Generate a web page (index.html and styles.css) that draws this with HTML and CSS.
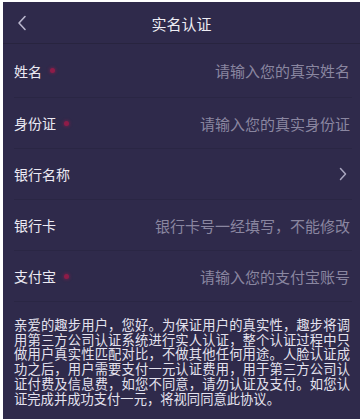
FILE: index.html
```html
<!DOCTYPE html>
<html lang="zh">
<head>
<meta charset="utf-8">
<title>实名认证</title>
<link rel="stylesheet" href="styles.css">
</head>
<body>
<div class="screen">
  <header class="nav">
    <svg class="back" width="10" height="16" viewBox="0 0 10 16"><path d="M8 1.5 L2 8 L8 14.5" fill="none" stroke="#b9b6cc" stroke-width="1.6" stroke-linecap="round" stroke-linejoin="round"/></svg>
    <div class="title">实名认证</div>
  </header>
  <div class="form">
    <div class="row">
      <div class="label">姓名<span class="req"></span></div>
      <div class="ph">请输入您的真实姓名</div>
    </div>
    <div class="row">
      <div class="label">身份证<span class="req"></span></div>
      <div class="ph">请输入您的真实身份证</div>
    </div>
    <div class="row">
      <div class="label">银行名称</div>
      <svg class="arrow" width="8" height="14" viewBox="0 0 8 14"><path d="M1.5 1.5 L6.5 7 L1.5 12.5" fill="none" stroke="#a9a6bf" stroke-width="1.5" stroke-linecap="round" stroke-linejoin="round"/></svg>
    </div>
    <div class="row">
      <div class="label">银行卡</div>
      <div class="ph">银行卡号一经填写，不能修改</div>
    </div>
    <div class="row">
      <div class="label">支付宝<span class="req"></span></div>
      <div class="ph">请输入您的支付宝账号</div>
    </div>
  </div>
  <p class="notice">亲爱的趣步用户，您好。为保证用户的真实性，趣步将调用第三方公司认证系统进行实人认证，整个认证过程中只做用户真实性匹配对比，不做其他任何用途。人脸认证成功之后，用户需要支付一元认证费用，用于第三方公司认证付费及信息费，如您不同意，请勿认证及支付。如您认证完成并成功支付一元，将视同同意此协议。</p>
</div>
</body>
</html>
```

FILE: styles.css
```css
html, body {
  margin: 0;
  padding: 0;
  background: #ffffff;
}
.screen {
  margin: 2px 4px 0 3px;
  height: 417px;
  background: #2f2a4b;
  overflow: hidden;
  font-family: "Noto Sans CJK SC", "Noto Sans", sans-serif;
}
.nav {
  height: 41px;
  display: flex;
  align-items: center;
  justify-content: center;
  position: relative;
  border-bottom: 1px solid #28243f;
}
.back {
  position: absolute;
  left: 14px;
  top: 13px;
}
.title {
  color: #eeedf4;
  font-size: 15px;
  line-height: 20px;
  padding-top: 2px;
}
.form {
  padding: 0 8px 0 11px;
}
.row {
  height: 50px;
  display: flex;
  align-items: center;
  justify-content: space-between;
  border-bottom: 1px solid #2a2644;
}
.row:first-child {
  height: 53px;
}
.label {
  color: #eceaf3;
  font-size: 14px;
  display: flex;
  align-items: center;
}
.req {
  display: inline-block;
  width: 5px;
  height: 5px;
  border-radius: 50%;
  background: #8e1c48;
  margin-left: 8px;
  box-shadow: 0 0 3px 1px rgba(150, 30, 75, 0.45);
}
.ph {
  color: #8a86a0;
  font-size: 15px;
  margin-right: 2px;
}
.arrow {
  margin-right: 5px;
}
.notice {
  margin: 16px 10px 0 11px;
  color: #e4e2ee;
  font-size: 13.3px;
  line-height: 14.7px;
  text-align: justify;
}
```
